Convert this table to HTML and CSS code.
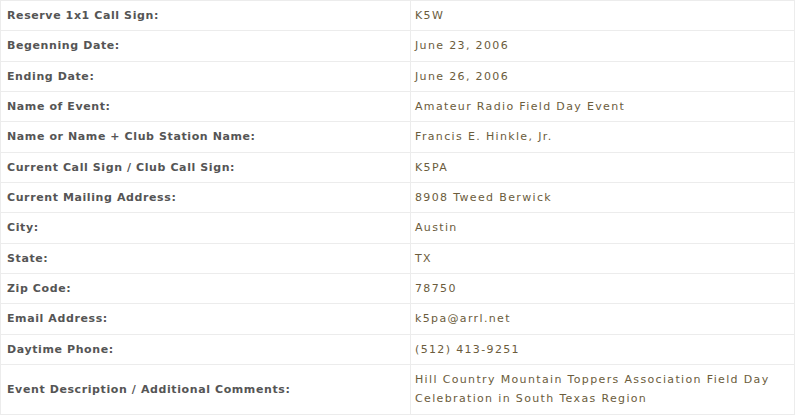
FILE: index.html
```html
<!DOCTYPE html>
<html>
<head>
<meta charset="utf-8">
<link rel="stylesheet" href="styles.css">
</head>
<body>
<table class="details">
  <tr><td class="label">Reserve 1x1 Call Sign:</td><td class="value">K5W</td></tr>
  <tr><td class="label">Begenning Date:</td><td class="value">June 23, 2006</td></tr>
  <tr><td class="label">Ending Date:</td><td class="value">June 26, 2006</td></tr>
  <tr><td class="label">Name of Event:</td><td class="value">Amateur Radio Field Day Event</td></tr>
  <tr><td class="label">Name or Name + Club Station Name:</td><td class="value">Francis E. Hinkle, Jr.</td></tr>
  <tr><td class="label">Current Call Sign / Club Call Sign:</td><td class="value">K5PA</td></tr>
  <tr><td class="label">Current Mailing Address:</td><td class="value">8908 Tweed Berwick</td></tr>
  <tr><td class="label">City:</td><td class="value">Austin</td></tr>
  <tr><td class="label">State:</td><td class="value">TX</td></tr>
  <tr><td class="label">Zip Code:</td><td class="value">78750</td></tr>
  <tr><td class="label">Email Address:</td><td class="value">k5pa@arrl.net</td></tr>
  <tr><td class="label">Daytime Phone:</td><td class="value">(512) 413-9251</td></tr>
  <tr><td class="label">Event Description / Additional Comments:</td><td class="value">Hill Country Mountain Toppers Association Field Day Celebration in South Texas Region</td></tr>
</table>
</body>
</html>
```

FILE: styles.css
```css
html, body {
  margin: 0;
  padding: 0;
  background: #ffffff;
}

.details {
  border-collapse: collapse;
  width: 795px;
  table-layout: fixed;
  font-family: "DejaVu Sans", Verdana, sans-serif;
  font-size: 11px;
}

.details td {
  border: 1px solid #ececec;
  padding: 5px 6px;
  line-height: 19.33px;
  vertical-align: middle;
}

.label {
  width: 397px;
  color: #555555;
  font-weight: bold;
  font-size: 11px;
  letter-spacing: 0.6px;
}

.details .value {
  padding-left: 4px;
  color: #6b5c3c;
  letter-spacing: 1.35px;
}
```
